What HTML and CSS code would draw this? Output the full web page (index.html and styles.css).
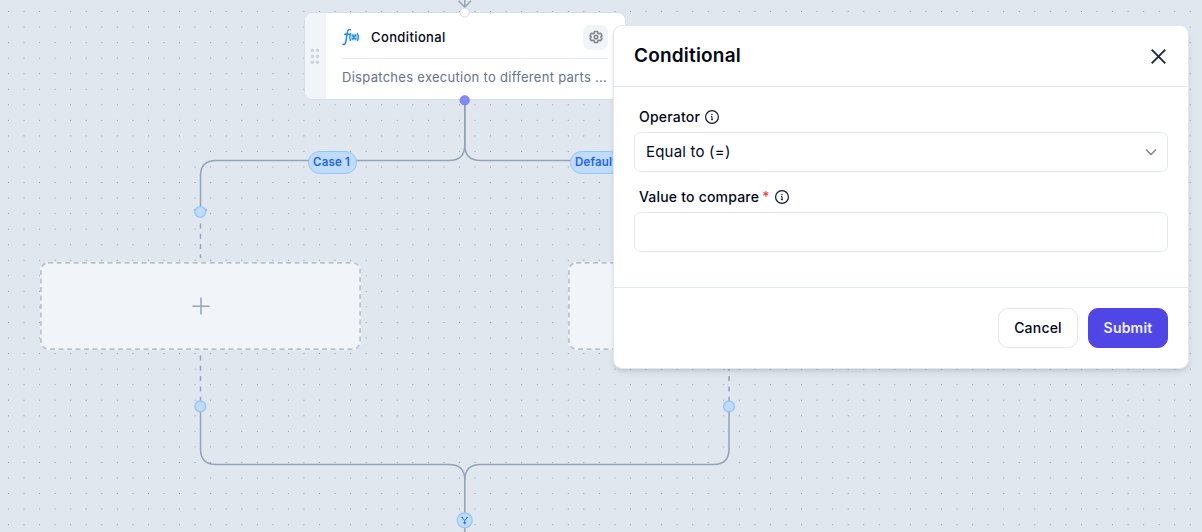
FILE: index.html
```
<!DOCTYPE html>
<html lang="en">
<head>
<meta charset="utf-8">
<title>Workflow editor</title>
<link rel="stylesheet" href="styles.css">
</head>
<body>
<main class="canvas">
  <svg class="edges" width="1202" height="532" viewBox="0 0 1202 532" fill="none">
    <defs>
      <pattern id="grid" x="8" y="11" width="15.55" height="15.55" patternUnits="userSpaceOnUse">
        <rect width="1" height="1" fill="#90939c"/>
      </pattern>
    </defs>
    <rect width="1202" height="532" fill="url(#grid)"/>
    <g stroke="#94a3b8" stroke-width="1.500">
      <path d="M464.8 0V8M458.6 0.8L464.8 7.2L471 0.8"/>
      <path d="M464.8 100V145Q464.8 160.5 449 160.5H216Q200.5 160.5 200.5 176V212"/>
      <path d="M464.8 100V145Q464.8 160.5 480.5 160.5H620"/>
      <path d="M194 209.500L200.500 214L207 209.500"/>
      <path d="M200.500 406V449Q200.500 464.500 216 464.500H449Q464.800 464.500 464.800 480V532"/>
      <path d="M729 406V449Q729 464.500 713.500 464.500H480.500Q464.800 464.500 464.800 480"/>
      <path d="M200.500 223.500V258M200.500 355.500V404M729 355.500V404" stroke-dasharray="5 5.300"/>
    </g>
  </svg>

  <article class="node">
    <div class="grip">
      <svg width="10" height="17" viewBox="0 0 10 17" fill="#cbd5e1">
        <circle cx="2.300" cy="2.500" r="1.800"/><circle cx="7.500" cy="2.500" r="1.800"/>
        <circle cx="2.300" cy="8.400" r="1.800"/><circle cx="7.500" cy="8.400" r="1.800"/>
        <circle cx="2.300" cy="14.300" r="1.800"/><circle cx="7.500" cy="14.300" r="1.800"/>
      </svg>
    </div>
    <div class="node-body">
      <header class="node-head">
        <svg class="fx" width="18" height="18" viewBox="0 0 18 18" fill="none" stroke="#1e88f5" stroke-linecap="round">
          <path d="M0.800 16.200C3 17 3.600 15.300 4 13L5.300 4.500C5.700 2 6.500 1.100 8.300 1.800M2.500 6.300H7.700" stroke-width="1.500"/>
          <rect x="8.500" y="5.700" width="7.500" height="6.800" fill="#a9d2fc" stroke="none"/>
          <path d="M8.600 5.700Q6.900 9 8.400 12.400M15.400 5.700Q17.300 9 15.600 12.400" stroke-width="1.300"/>
          <path d="M10.500 7.300L13.500 10.900M13.500 7.300L10.500 10.900" stroke-width="1.600"/>
        </svg>
        <span class="node-title">Conditional</span>
        <span class="gear">
          <svg width="14" height="14" viewBox="0 0 24 24" fill="none" stroke="#83878f" stroke-width="2.700" stroke-linejoin="round">
            <path d="M9.500 2.500h5l.7 3 1.800 1 3-.9 2.300 4-2.200 2.400 2.200 2.400-2.300 4-3-.9-1.800 1-.7 3h-5l-.7-3-1.800-1-3 .9-2.300-4 2.200-2.400-2.200-2.400 2.300-4 3 .9 1.800-1z"/>
            <circle cx="12" cy="12" r="3"/>
          </svg>
        </span>
      </header>
      <p class="node-desc">Dispatches execution to different parts ...</p>
    </div>
  </article>

  <div class="slot slot-case">
    <svg class="outline" width="321" height="88" viewBox="0 0 321 88" fill="none"><rect x="0.900" y="0.900" width="319.200" height="86.200" rx="7.200"/></svg>
    <svg width="18" height="18" viewBox="0 0 18 18" stroke="#94a3b8" stroke-width="1.500"><path d="M9 0.500V17.500M0.500 9.200H17.500"/></svg>
  </div>
  <div class="slot slot-default">
    <svg class="outline" width="321" height="88" viewBox="0 0 321 88" fill="none"><rect x="0.900" y="0.900" width="319.200" height="86.200" rx="7.200"/></svg>
  </div>

  <span class="tag tag-case">Case 1</span>
  <span class="tag tag-default">Default</span>

  <svg class="ports" width="1202" height="532" viewBox="0 0 1202 532">
    <circle cx="464.700" cy="12.500" r="4.600" fill="#fff" stroke="#d3dbe6"/>
    <circle cx="464.700" cy="100.300" r="4.600" fill="#818cf8" stroke="#7a75f3"/>
    <g fill="#bfdbfe" stroke="#93c5fd" stroke-width="1.300">
      <circle cx="200.300" cy="212" r="5.400"/>
      <circle cx="200.300" cy="406.400" r="5.400"/>
      <circle cx="729" cy="406.400" r="5.400"/>
      <circle cx="464.700" cy="520.300" r="7.500"/>
    </g>
    <path d="M462 517.500L464.700 520.500L467.400 517.500M464.700 520.500V524.300M461.500 517.400H463M466.400 517.400H467.900M463.300 522.800H466.100" fill="none" stroke="#2563eb" stroke-width="1"/>
  </svg>
</main>

<section class="dialog">
  <header class="dialog-head">
    <h2>Conditional</h2>
    <svg width="16" height="16" viewBox="0 0 16 16" fill="none" stroke="#1e293b" stroke-width="1.900"><path d="M1.700 1.700L15.300 15.300M15.300 1.700L1.700 15.300"/></svg>
  </header>
  <div class="dialog-body">
    <div class="label">
      <span class="label-text">Operator</span>
      <svg class="info" width="16" height="16" viewBox="0 0 16 16" fill="none" stroke="#0f172a"><circle cx="8" cy="8" r="6.400" stroke-width="1.200"/><path d="M7 7.500H8V10.700M7 10.700H9" stroke-width="1"/><circle cx="7.900" cy="5.500" r=".7" fill="#0f172a" stroke="none"/></svg>
    </div>
    <div class="field select">
      <span>Equal to (=)</span>
      <svg width="12" height="8" viewBox="0 0 12 8" fill="none" stroke="#808087" stroke-width="1.400"><path d="M1 1.500L6 6.500L11 1.500"/></svg>
    </div>
    <div class="label second">
      <span class="label-text">Value to compare</span><span class="required">*</span>
      <svg class="info" width="16" height="16" viewBox="0 0 16 16" fill="none" stroke="#0f172a"><circle cx="8" cy="8" r="6.400" stroke-width="1.200"/><path d="M7 7.500H8V10.700M7 10.700H9" stroke-width="1"/><circle cx="7.900" cy="5.500" r=".7" fill="#0f172a" stroke="none"/></svg>
    </div>
    <div class="field"></div>
  </div>
  <footer class="dialog-foot">
    <button class="btn">Cancel</button>
    <button class="btn primary">Submit</button>
  </footer>
</section>
</body>
</html>
```
FILE: styles.css
```
* { box-sizing: border-box; }
body {
  margin: 0;
  width: 1202px;
  height: 532px;
  overflow: hidden;
  position: relative;
  background: #e1e7ef;
  color: #020817;
  font-family: Inter, "Liberation Sans", sans-serif;
}
svg { display: block; flex: none; }
.canvas { position: relative; width: 1202px; height: 532px; }
.edges, .ports { position: absolute; left: 0; top: 0; }

.node {
  position: absolute;
  left: 304px;
  top: 12px;
  width: 322px;
  height: 88px;
  display: flex;
  background: #fff;
  border: 1px solid #d5deea;
  border-radius: 8px;
  overflow: hidden;
}
.grip {
  width: 21px;
  padding-right: 1px;
  background: #f1f5f9;
  display: flex;
  align-items: center;
  justify-content: center;
}
.node-body { flex: 1; min-width: 0; padding: 0 17px 0 16px; }
.node-head {
  display: flex;
  align-items: center;
  height: 46px;
  padding-top: 3px;
  border-bottom: 1px solid #e2e8f0;
}
.node-title { margin-left: 11px; font-size: 13px; font-weight: 450; letter-spacing: .38px; line-height: 20px; }
.gear {
  margin-left: auto;
  width: 25px;
  height: 25px;
  border-radius: 7px;
  background: #f1f5f9;
  display: flex;
  align-items: center;
  justify-content: center;
}
.node-desc {
  margin: 8px 0 0;
  font-size: 13px;
  letter-spacing: .29px;
  line-height: 20px;
  white-space: nowrap;
  color: #64748b;
}

.slot {
  position: absolute;
  top: 262px;
  width: 321px;
  height: 88px;
  border-radius: 8px;
  background: #f1f5f9;
  display: flex;
  align-items: center;
  justify-content: center;
}
.outline { position: absolute; inset: 0; stroke: #b8c3d2; stroke-width: 1.7; stroke-dasharray: 5 3.5; }
.slot-case { left: 40px; }
.slot-default { left: 568px; }

.tag {
  position: absolute;
  top: 151px;
  height: 23px;
  padding: 0 4px;
  border: 1px solid #93c5fd;
  border-radius: 12px;
  background: #bfdbfe;
  color: #2563eb;
  font-size: 11.5px;
  font-weight: 600;
  letter-spacing: .2px;
  line-height: 21px;
  white-space: nowrap;
}
.tag-case { left: 308px; width: 49px; }
.tag-default { left: 570px; }

.dialog {
  position: absolute;
  left: 613px;
  top: 25px;
  width: 576px;
  height: 344px;
  background: #fff;
  border: 1px solid #e2e8f0;
  border-radius: 9px;
  box-shadow: 0 4px 6px -1px rgba(0, 0, 0, .1), 0 2px 4px -2px rgba(0, 0, 0, .1);
}
.dialog-head {
  height: 61px;
  padding: 0 22px 0 20px;
  display: flex;
  align-items: center;
  justify-content: space-between;
  border-bottom: 1px solid #e2e8f0;
}
.dialog-head h2 { margin: 0; font-size: 19px; font-weight: 600; letter-spacing: .2px; line-height: 28px; }
.dialog-body { height: 201px; padding: 20px 20px 0; border-bottom: 1px solid #e2e8f0; }
.label {
  display: flex;
  align-items: center;
  height: 20px;
  padding-left: 5px;
  margin-bottom: 5px;
  font-size: 14px;
  font-weight: 500;
  letter-spacing: .2px;
}
.label-text, .required { padding-bottom: 2px; }
.label.second { margin-top: 15px; }
.info { margin-left: 4px; }
.required { margin-left: 3px; color: #ef4444; }
.field {
  height: 40px;
  padding: 0 10px 0 11px;
  border: 1px solid #e2e8f0;
  border-radius: 7px;
  display: flex;
  align-items: center;
  justify-content: space-between;
  font-size: 15px;
  letter-spacing: .2px;
}
.field span { padding-bottom: 2px; }
.dialog-foot { display: flex; justify-content: flex-end; gap: 10px; padding: 20px 20px 0; }
.btn {
  width: 80px;
  height: 40px;
  padding: 0;
  border: 1px solid #e2e8f0;
  border-radius: 10px;
  background: #fff;
  color: #020817;
  font: 500 14px/20px Inter, "Liberation Sans", sans-serif;
  letter-spacing: .2px;
}
.btn.primary { border-color: #4f46e5; background: #4f46e5; color: #eef2ff; font-weight: 600; }
```
